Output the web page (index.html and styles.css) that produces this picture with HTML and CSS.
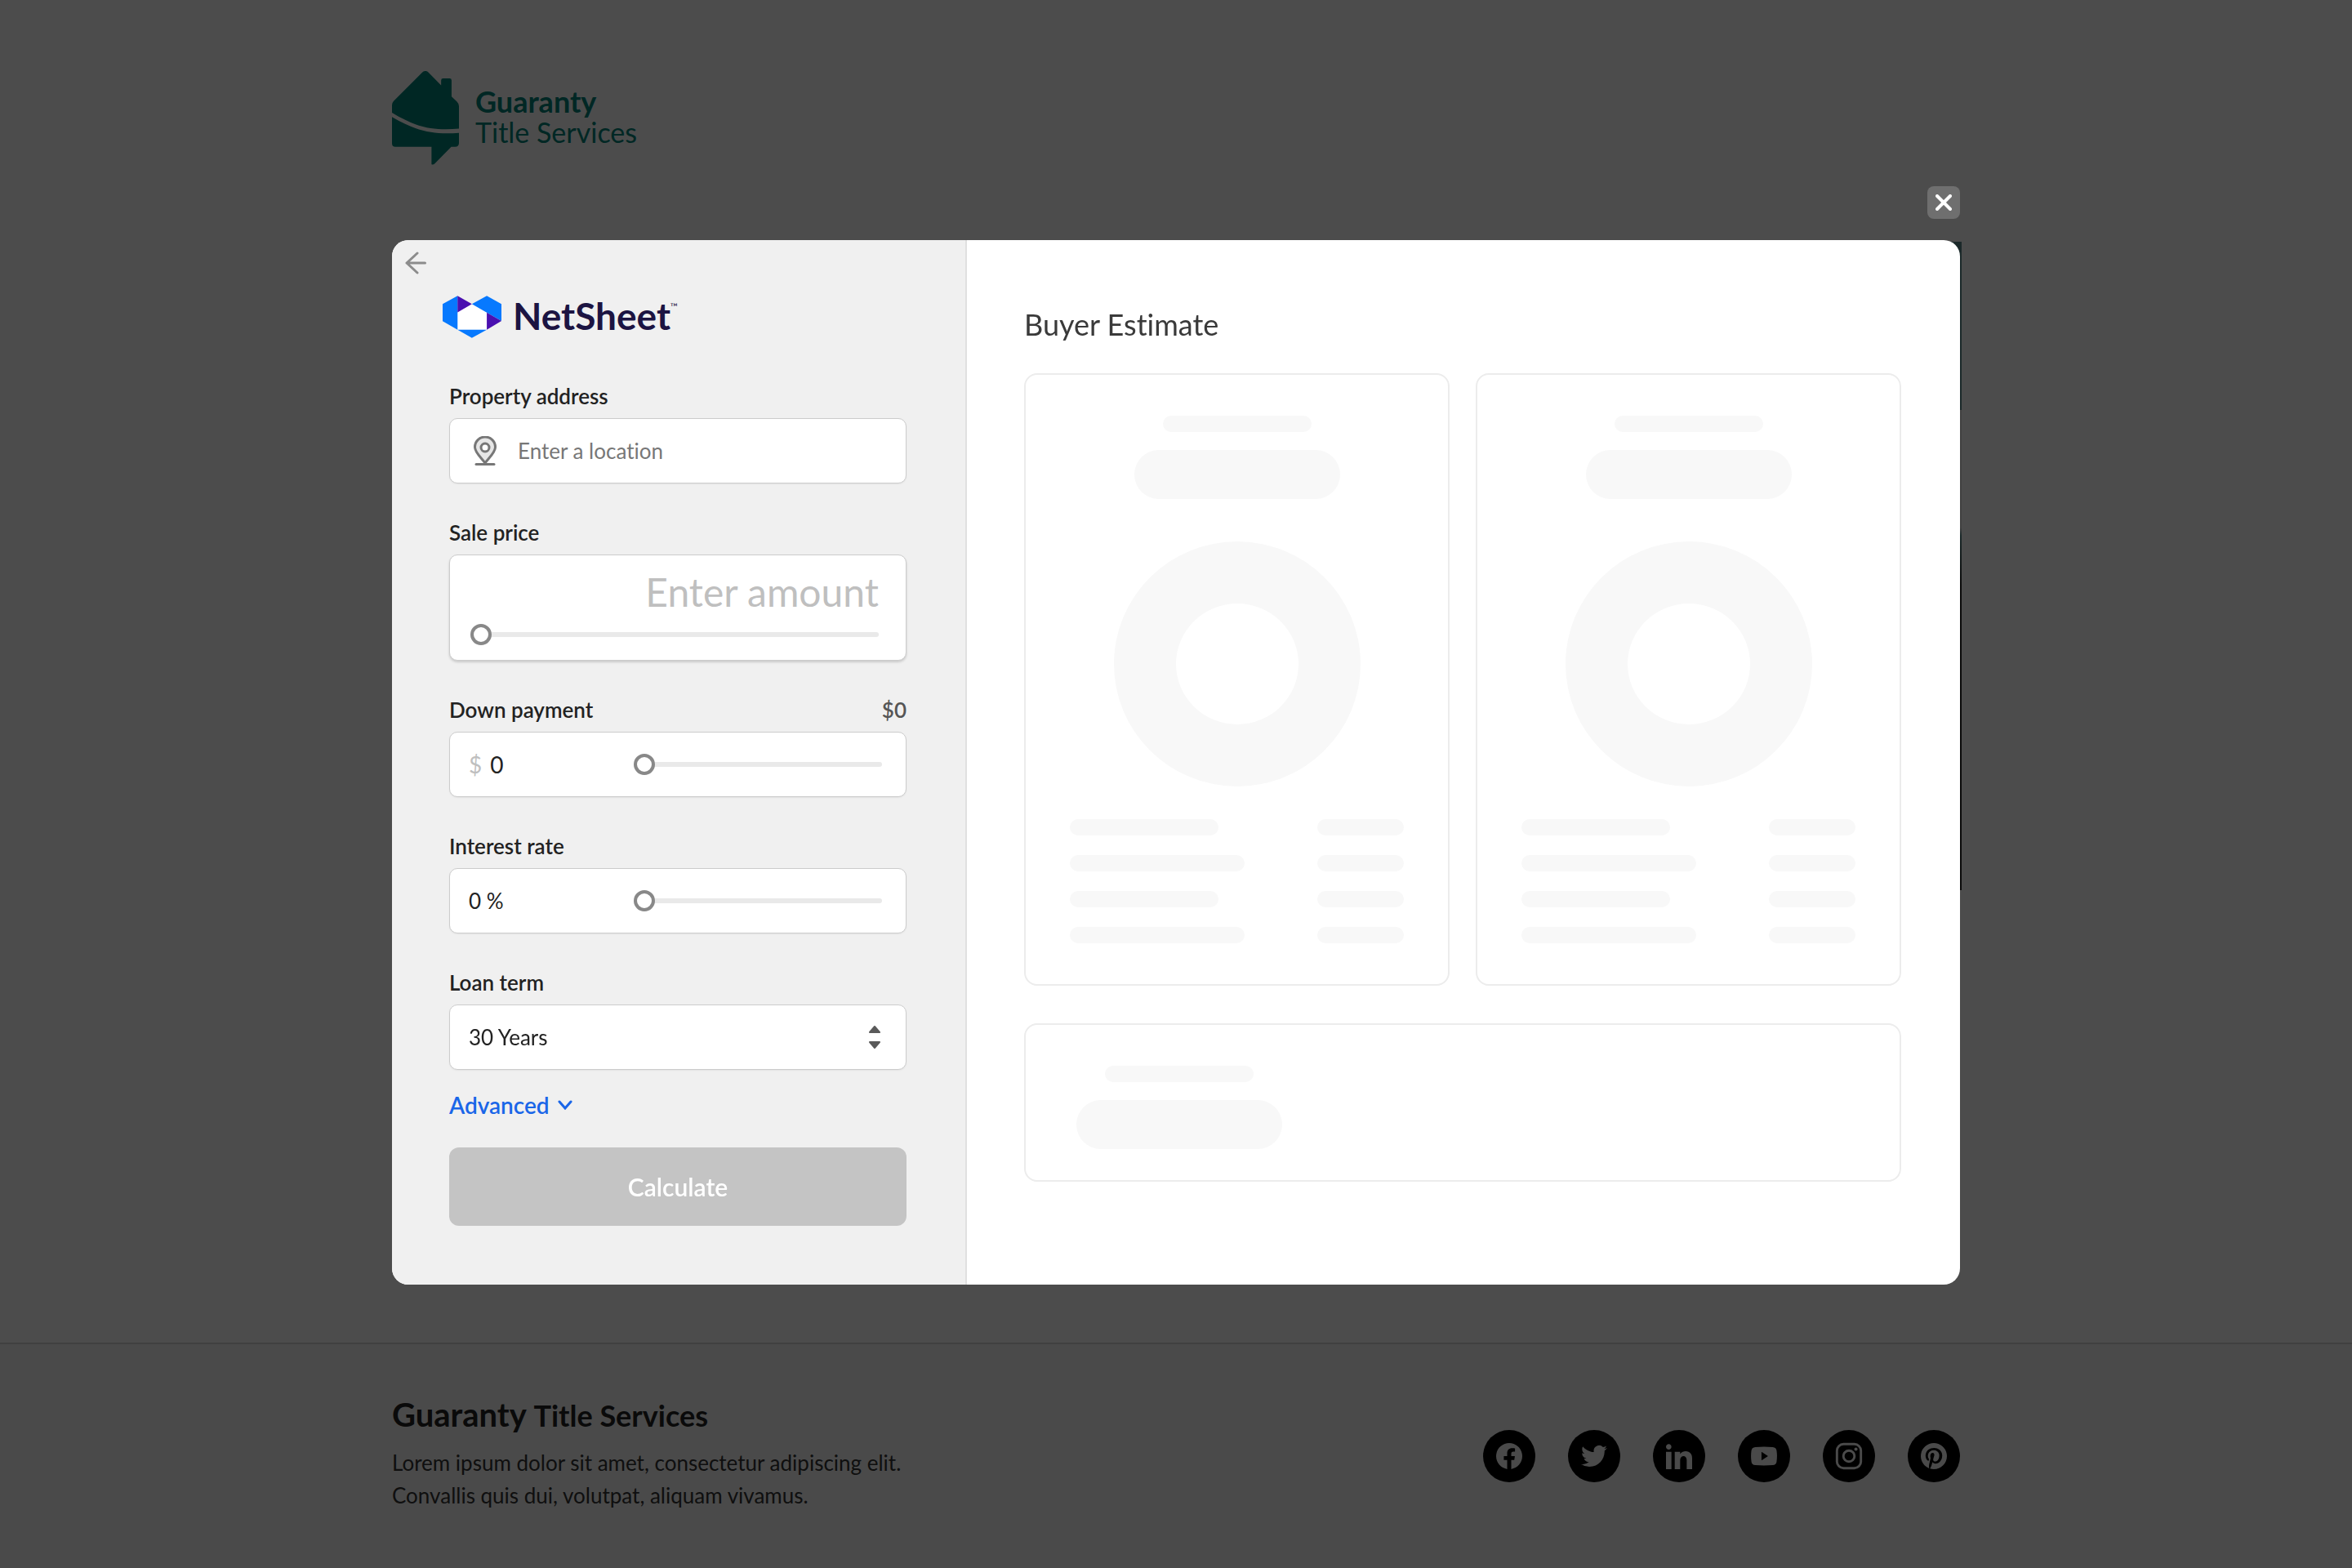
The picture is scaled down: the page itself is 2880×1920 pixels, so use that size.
FILE: index.html
```html
<!DOCTYPE html>
<html lang="en">
<head>
<meta charset="utf-8">
<meta name="viewport" content="width=device-width, initial-scale=1">
<title>NetSheet – Buyer Estimate</title>
<link rel="stylesheet" href="styles.css">
</head>
<body>
<div class="page">
  <header class="site-header container">
    <a class="site-logo" href="#">
      <svg class="site-logo-mark" viewBox="62 50 244 342" aria-hidden="true">
        <path d="M62 174q0-9 6-15L172 55q4-5 10-5h4q5 0 9 5l46 47V84q0-7 7-7h24q7 0 7 7v59l19 18q8 8 8 17v82C225 266 160 262 62 202z"/>
        <path d="M62 217C155 272 220 282 306 275v37q0 14-14 14h-14l-60 61q-5 5-12 3v-64H74q-12 0-12-12z"/>
      </svg>
      <span class="site-logo-text"><strong>Guaranty</strong><span>Title Services</span></span>
    </a>
  </header>
  <main class="container">
    <div class="hero"></div>
  </main>
  <footer class="site-footer">
    <div class="container footer-row">
      <div class="footer-about">
        <h2 class="footer-title">Guaranty <small>Title Services</small></h2>
        <p>Lorem ipsum dolor sit amet, consectetur adipiscing elit.<br>Convallis quis dui, volutpat, aliquam vivamus.</p>
      </div>
      <nav class="social" aria-label="Social media">
        <a href="#" aria-label="Facebook"><svg viewBox="0 0 24 24"><path d="M24 12.073c0-6.627-5.373-12-12-12s-12 5.373-12 12c0 5.99 4.388 10.954 10.125 11.854v-8.385H7.078v-3.47h3.047V9.43c0-3.007 1.792-4.669 4.533-4.669 1.312 0 2.686.235 2.686.235v2.953H15.83c-1.491 0-1.956.925-1.956 1.874v2.25h3.328l-.532 3.47h-2.796v8.385C19.612 23.027 24 18.062 24 12.073z"/></svg></a>
        <a href="#" aria-label="Twitter"><svg viewBox="0 0 24 24"><path d="M23.953 4.57a10 10 0 01-2.825.775 4.958 4.958 0 002.163-2.723c-.951.555-2.005.959-3.127 1.184a4.92 4.92 0 00-8.384 4.482C7.69 8.095 4.067 6.13 1.64 3.162a4.822 4.822 0 00-.666 2.475c0 1.71.87 3.213 2.188 4.096a4.904 4.904 0 01-2.228-.616v.06a4.923 4.923 0 003.946 4.827 4.996 4.996 0 01-2.212.085 4.936 4.936 0 004.604 3.417 9.867 9.867 0 01-6.102 2.105c-.39 0-.779-.023-1.17-.067a13.995 13.995 0 007.557 2.209c9.053 0 13.998-7.496 13.998-13.985 0-.21 0-.42-.015-.63A9.935 9.935 0 0024 4.59z"/></svg></a>
        <a href="#" aria-label="LinkedIn"><svg viewBox="0 0 24 24"><path d="M4.98 3.5C4.98 4.881 3.87 6 2.5 6S.02 4.881.02 3.5C.02 2.12 1.13 1 2.5 1s2.48 1.12 2.48 2.5zM5 8H0v16h5V8zm7.982 0H8.014v16h4.969v-8.399c0-4.67 6.029-5.052 6.029 0V24H24V13.869c0-7.88-8.922-7.593-11.018-3.714V8z"/></svg></a>
        <a href="#" aria-label="YouTube"><svg viewBox="0 0 24 24"><path fill-rule="evenodd" d="M4 3.8Q12 3.1 20 3.8q3.3.2 3.6 3.4.7 4.8 0 9.6-.3 3.200-3.600 3.400-8 .7-16 0Q.7 20 .4 16.800q-.7-4.800 0-9.600Q.7 4 4 3.800zM9.700 8v8l6-4z"/></svg></a>
        <a href="#" aria-label="Instagram"><svg viewBox="0 0 24 24"><g fill="none" stroke="currentColor" stroke-width="2.200"><rect x="1" y="1" width="22" height="22" rx="6"/><circle cx="12" cy="12" r="5.100"/></g><circle cx="18.400" cy="5.600" r="1.500"/></svg></a>
        <a href="#" aria-label="Pinterest"><svg viewBox="0 0 24 24"><path d="M12 0C5.373 0 0 5.372 0 12c0 5.084 3.163 9.426 7.627 11.174-.105-.949-.2-2.405.042-3.441.218-.937 1.407-5.965 1.407-5.965s-.359-.719-.359-1.782c0-1.668.967-2.914 2.171-2.914 1.023 0 1.518.769 1.518 1.690 0 1.029-.655 2.568-.994 3.995-.283 1.194.599 2.169 1.777 2.169 2.133 0 3.772-2.249 3.772-5.495 0-2.873-2.064-4.882-5.012-4.882-3.414 0-5.418 2.561-5.418 5.207 0 1.031.397 2.138.893 2.738a.36.36 0 01.083.345l-.333 1.360c-.053.220-.174.267-.402.161-1.499-.698-2.436-2.889-2.436-4.649 0-3.785 2.750-7.262 7.929-7.262 4.163 0 7.398 2.967 7.398 6.931 0 4.136-2.607 7.464-6.227 7.464-1.216 0-2.359-.631-2.750-1.378l-.748 2.853c-.271 1.043-1.002 2.350-1.492 3.146C9.570 23.812 10.763 24 12 24c6.627 0 12-5.373 12-12 0-6.628-5.373-12-12-12z"/></svg></a>
      </nav>
    </div>
  </footer>
</div>

<div class="scrim">
  <div class="container dialog-stack">
    <button class="close" type="button" aria-label="Close">
      <svg viewBox="0 0 20 20" aria-hidden="true"><path d="M2 2l16 16M18 2L2 18"/></svg>
    </button>
    <div class="dialog" role="dialog" aria-modal="true" aria-labelledby="estimate-title">
      <section class="inputs">
        <button class="back" type="button" aria-label="Back">
          <svg viewBox="0 0 26 28" aria-hidden="true"><path d="M15 2L2 14l13 12M2 14h22.500"/></svg>
        </button>
        <div class="brand">
          <svg class="brand-mark" viewBox="216 246 213 153" aria-hidden="true">
            <path fill="#fff" d="M270 306l52-30 54 31v62H270z"/>
            <path fill="#0779fe" d="M216 276l54-30v123l-54-31zM322 276l54-30 53 30v61l-53-30zM270 369h106l-54 30z"/>
            <path fill="#4a10b0" d="M270 246l52 30-52 30zM376 307l53 30-53 32z"/>
          </svg>
          <span class="brand-name">NetSheet</span><span class="brand-tm">™</span>
        </div>
        <form class="form">
          <div class="group">
            <div class="label-row"><label for="address">Property address</label></div>
            <div class="field address">
              <svg class="pin" viewBox="0 0 28 36" aria-hidden="true"><path fill="#e6e6e6" d="M14 33C9 26 1.500 20 1.500 13.500a12.500 12.500 0 0125 0C26.500 20 19 26 14 33z"/><circle cx="14" cy="14" r="5" fill="#fff"/><path d="M3 34.500h22"/></svg>
              <input id="address" type="text" placeholder="Enter a location">
            </div>
          </div>
          <div class="group">
            <div class="label-row"><label for="price">Sale price</label></div>
            <div class="field price">
              <input id="price" type="text" placeholder="Enter amount">
              <input type="range" min="0" max="100" value="0" aria-label="Sale price slider">
            </div>
          </div>
          <div class="group">
            <div class="label-row"><label for="down">Down payment</label><output for="down">$0</output></div>
            <div class="field split">
              <div class="money"><span class="unit">$</span><input id="down" type="text" value="0"></div>
              <input type="range" min="0" max="100" value="0" aria-label="Down payment slider">
            </div>
          </div>
          <div class="group">
            <div class="label-row"><label for="rate">Interest rate</label></div>
            <div class="field split">
              <input id="rate" type="text" value="0 %">
              <input type="range" min="0" max="100" value="0" aria-label="Interest rate slider">
            </div>
          </div>
          <div class="group">
            <div class="label-row"><label for="term">Loan term</label></div>
            <div class="field term">
              <select id="term"><option>30 Years</option><option>20 Years</option><option>15 Years</option></select>
              <svg class="sort" viewBox="0 0 16 28" aria-hidden="true"><path d="M8 1l6 7H2zM8 27l6-7H2z"/></svg>
            </div>
          </div>
          <button class="advanced" type="button">Advanced
            <svg viewBox="0 0 18 12" aria-hidden="true"><path d="M2 2l7 8 7-8"/></svg>
          </button>
          <button class="calculate" type="submit">Calculate</button>
        </form>
      </section>
      <section class="results">
        <h1 id="estimate-title">Buyer Estimate</h1>
        <div class="cards" aria-hidden="true">
          <div class="card chart-card">
            <i class="bone bar"></i><i class="bone pill"></i><i class="ring"></i>
            <div class="rows">
              <i class="bone bar"></i><i class="bone value"></i>
              <i class="bone bar long"></i><i class="bone value"></i>
              <i class="bone bar"></i><i class="bone value"></i>
              <i class="bone bar long"></i><i class="bone value"></i>
            </div>
          </div>
          <div class="card chart-card">
            <i class="bone bar"></i><i class="bone pill"></i><i class="ring"></i>
            <div class="rows">
              <i class="bone bar"></i><i class="bone value"></i>
              <i class="bone bar long"></i><i class="bone value"></i>
              <i class="bone bar"></i><i class="bone value"></i>
              <i class="bone bar long"></i><i class="bone value"></i>
            </div>
          </div>
          <div class="card total-card">
            <div class="total"><i class="bone bar"></i><i class="bone pill"></i></div>
          </div>
        </div>
      </section>
    </div>
  </div>
</div>
</body>
</html>
```

FILE: styles.css
```css
*, *::before, *::after { box-sizing: border-box; }

body {
  margin: 0;
  background: #fff;
  color: #222;
  font-family: Lato, "Open Sans", sans-serif;
  font-size: 26px;
  font-variant-ligatures: none;
  line-height: 32px;
}

button, input, select { font: inherit; font-variant-ligatures: none; color: inherit; }
button { border: 0; padding: 0; background: none; cursor: pointer; }
h1, h2, p { margin: 0; }
svg { display: block; flex: none; }

.container {
  width: calc(100% - 64px);
  max-width: 1920px;
  margin-inline: auto;
}

/* Site behind the dialog */
.page {
  display: flex;
  flex-direction: column;
  min-height: 100vh;
}

.page main { flex: 1; }

.site-header { padding: 87px 0 94px; }

.site-logo {
  display: inline-flex;
  align-items: center;
  gap: 20px;
  color: #008478;
  text-decoration: none;
  vertical-align: top;
}

.site-logo-mark { width: 82px; height: 115px; fill: currentColor; }

.site-logo-text {
  display: flex;
  flex-direction: column;
  padding-bottom: 4px;
  font-size: 34px;
  line-height: 38px;
}

.site-logo-text strong { font-size: 36px; font-weight: 700; }

.hero {
  height: 794px;
  margin-right: -2px;
  background:
    linear-gradient(90deg, #fff 40px, transparent 50%),
    linear-gradient(#5a8a8c 0 206px, #dadada 206px 350px, #5a8a8c 360px, #222 420px);
}

.site-footer {
  border-top: 2px solid #d8d8d8;
  background: #f8f8f8;
  color: #333;
}

.footer-row {
  display: flex;
  justify-content: space-between;
  align-items: center;
  gap: 40px;
  padding: 62px 0 69px;
}

.footer-about { line-height: 40px; }

.footer-title {
  margin-bottom: 14px;
  color: #222;
  font-size: 40px;
  font-weight: 700;
  line-height: 48px;
}

.footer-title small { font-size: 36px; }

.social { display: flex; gap: 40px; padding-top: 6px; }

.social a {
  display: grid;
  place-items: center;
  width: 64px;
  height: 64px;
  border-radius: 50%;
  background: #000;
  color: #f8f8f8;
}

.social svg { width: 32px; height: 32px; fill: currentColor; overflow: visible; }

/* Dialog */
.scrim {
  position: fixed;
  inset: 0;
  overflow: auto;
  padding: 228px 0 64px;
  background: rgba(0, 0, 0, .7);
}

.dialog-stack {
  display: flex;
  flex-direction: column;
  gap: 26px;
}

.close {
  display: grid;
  place-items: center;
  align-self: flex-end;
  width: 40px;
  height: 40px;
  border-radius: 8px;
  background: #6f6f6f;
}

.close svg { width: 20px; height: 20px; stroke: #fff; stroke-width: 4; stroke-linecap: round; }

.dialog {
  display: grid;
  grid-template-columns: minmax(0, 11fr) minmax(0, 19fr);
  overflow: hidden;
  border-radius: 20px;
  background: #fff;
}

.inputs {
  border-right: 2px solid #e0e0e0;
  background: #f0f0f0;
}

.back { display: block; padding: 14px 16px; }

.back svg {
  width: 26px;
  height: 28px;
  fill: none;
  stroke: #8c8c8c;
  stroke-width: 3;
  stroke-linecap: round;
  stroke-linejoin: round;
}

.brand {
  display: flex;
  align-items: flex-start;
  padding: 12px 62px 0;
  color: #1c1442;
}

.brand-mark { width: 72px; height: 52px; margin-right: 14px; }
.brand-name { font-size: 46px; font-weight: 700; line-height: 50px; }
.brand-tm { font-size: 12px; line-height: 28px; }

.form { padding: 55px 72px 72px 70px; }

.group { margin-bottom: 44px; }
.group:last-of-type { margin-bottom: 0; }

.label-row {
  display: flex;
  justify-content: space-between;
  margin-bottom: 11px;
  font-weight: 600;
}

.label-row output { color: #555; }

.field {
  display: flex;
  align-items: center;
  min-height: 80px;
  border: 1px solid #ccc;
  border-radius: 10px;
  background: #fff;
  box-shadow: 0 1px 2px rgba(0, 0, 0, .06);
}

.field input, .field select {
  min-width: 0;
  margin: 0;
  padding: 0;
  border: 0;
  outline: 0;
  background: none;
}

.address { gap: 26px; padding: 0 29px; }
.address input { flex: 1; }
.address input::placeholder { color: #777; opacity: 1; }

.pin {
  width: 28px;
  height: 36px;
  stroke: #777;
  stroke-width: 3;
  stroke-linecap: round;
}

.price {
  flex-direction: column;
  align-items: stretch;
  gap: 16px;
  padding: 20px 33px 18px 25px;
  box-shadow: 0 2px 3px rgba(0, 0, 0, .16);
}

.price input[type="text"] {
  height: 48px;
  font-size: 48px;
  line-height: 48px;
  text-align: right;
}

.price input::placeholder { color: #bfbfbf; opacity: 1; }

.split {
  display: grid;
  grid-template-columns: minmax(0, 2fr) minmax(0, 3fr);
  padding: 0 29px 0 23px;
}

.split input[type="text"] { width: 100%; }
.money { display: flex; gap: 10px; font-size: 28px; }
.unit { color: #bfbfbf; }

input[type="range"] {
  appearance: none;
  height: 26px;
}

input[type="range"]::-webkit-slider-runnable-track {
  height: 6px;
  border-radius: 3px;
  background: #e9e9e9;
}

input[type="range"]::-webkit-slider-thumb {
  appearance: none;
  width: 26px;
  height: 26px;
  margin-top: -10px;
  border: 4px solid #888;
  border-radius: 50%;
  background: #fff;
}

.term { position: relative; }

.term select {
  appearance: none;
  width: 100%;
  height: 78px;
  padding: 0 60px 0 23px;
}

.sort {
  position: absolute;
  right: 30px;
  width: 16px;
  height: 28px;
  fill: #5a5a5a;
  stroke: #5a5a5a;
  stroke-width: 2;
  stroke-linejoin: round;
  pointer-events: none;
}

.advanced {
  display: flex;
  align-items: center;
  gap: 10px;
  margin: 27px 0 36px;
  color: #1a66e8;
  font-size: 28px;
  font-weight: 600;
}

.advanced svg {
  width: 18px;
  height: 12px;
  fill: none;
  stroke: currentColor;
  stroke-width: 3;
  stroke-linecap: round;
}

.calculate {
  width: 100%;
  height: 96px;
  border-radius: 12px;
  background: #c4c4c4;
  color: #fff;
  font-size: 30px;
  font-weight: 600;
}

.results { padding: 79px 72px 72px 70px; }

.results h1 {
  margin-bottom: 36px;
  color: #3a3a3a;
  font-size: 36px;
  font-weight: 400;
  line-height: 48px;
}

.cards {
  display: grid;
  grid-template-columns: 1fr 1fr;
  gap: 46px 32px;
}

.card { border: 2px solid #ececec; border-radius: 16px; }

.bone { display: block; border-radius: 30px; background: #f8f8f8; }
.bar { width: 182px; height: 20px; }
.bar.long { width: 214px; }
.pill { width: 252px; height: 60px; }
.value { width: 106px; height: 20px; }

.chart-card {
  display: flex;
  flex-direction: column;
  align-items: center;
  padding: 50px 54px;
}

.chart-card .pill { margin: 22px 0 52px; }

.ring {
  width: 302px;
  height: 300px;
  border: 76px solid #f8f8f8;
  border-radius: 50%;
}

.rows {
  display: grid;
  grid-template-columns: 1fr auto;
  gap: 24px;
  width: 100%;
  margin-top: 40px;
}

.total-card {
  grid-column: 1 / -1;
  display: flex;
  padding: 50px 62px 38px;
}

.total {
  display: flex;
  flex-direction: column;
  align-items: center;
  gap: 22px;
}
```
